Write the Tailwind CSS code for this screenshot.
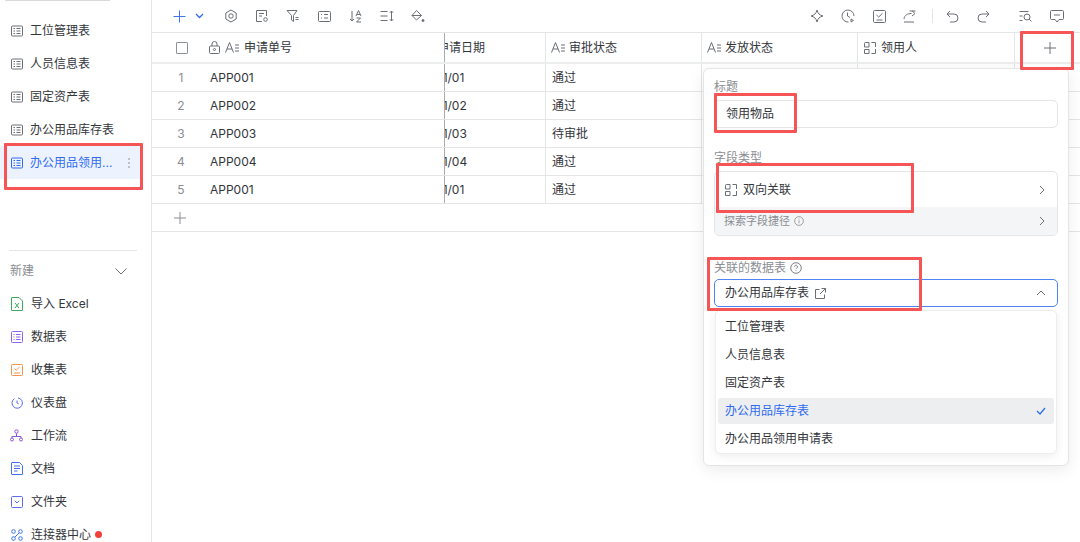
<!DOCTYPE html>
<html lang="zh-CN">
<head>
<meta charset="UTF-8">
<title>办公用品领用申请表</title>
<script src="https://cdn.jsdelivr.net/npm/@tailwindcss/browser@4"></script>
</head>
<body class="bg-white">
<div class="relative flex w-[1080px] h-[542px] overflow-hidden text-[12px] text-[#33363b] font-['Inter','Noto_Sans_CJK_SC',sans-serif]">

  <!-- Sidebar -->
  <aside class="w-[152px] shrink-0 border-r border-[#e4e5e7] h-full">
    <div class="mx-[5px] w-[105px] h-px bg-[#d9dadc]"></div>
    <div class="pt-[13px] pr-[10px] h-[249px]">
      <div class="flex items-center gap-[7px] h-[33px] pl-[11px]">
        <svg class="w-[12px] h-[12px] text-[#6b6f76]" viewBox="0 0 12 12" fill="none" stroke="currentColor"><rect x="0.5" y="1" width="11" height="10" rx="1"/><path d="M2.5 3.5h1.5M5.5 3.5h4M2.5 6h1.5M5.5 6h4M2.5 8.5h1.5M5.5 8.5h4"/></svg>
        <span>工位管理表</span>
      </div>
      <div class="flex items-center gap-[7px] h-[33px] pl-[11px]">
        <svg class="w-[12px] h-[12px] text-[#6b6f76]" viewBox="0 0 12 12" fill="none" stroke="currentColor"><rect x="0.5" y="1" width="11" height="10" rx="1"/><path d="M2.5 3.5h1.5M5.5 3.5h4M2.5 6h1.5M5.5 6h4M2.5 8.5h1.5M5.5 8.5h4"/></svg>
        <span>人员信息表</span>
      </div>
      <div class="flex items-center gap-[7px] h-[33px] pl-[11px]">
        <svg class="w-[12px] h-[12px] text-[#6b6f76]" viewBox="0 0 12 12" fill="none" stroke="currentColor"><rect x="0.5" y="1" width="11" height="10" rx="1"/><path d="M2.5 3.5h1.5M5.5 3.5h4M2.5 6h1.5M5.5 6h4M2.5 8.5h1.5M5.5 8.5h4"/></svg>
        <span>固定资产表</span>
      </div>
      <div class="flex items-center gap-[7px] h-[33px] pl-[11px]">
        <svg class="w-[12px] h-[12px] text-[#6b6f76]" viewBox="0 0 12 12" fill="none" stroke="currentColor"><rect x="0.5" y="1" width="11" height="10" rx="1"/><path d="M2.5 3.5h1.5M5.5 3.5h4M2.5 6h1.5M5.5 6h4M2.5 8.5h1.5M5.5 8.5h4"/></svg>
        <span>办公用品库存表</span>
      </div>
      <div class="flex items-center gap-[7px] h-[33px] pl-[11px] ml-[0px] text-[#2f6bf0] bg-[#edf3fe]">
        <svg class="w-[12px] h-[12px]" viewBox="0 0 12 12" fill="none" stroke="currentColor"><rect x="0.5" y="1" width="11" height="10" rx="1"/><path d="M2.5 3.5h1.5M5.5 3.5h4M2.5 6h1.5M5.5 6h4M2.5 8.5h1.5M5.5 8.5h4"/></svg>
        <span>办公用品领用...</span>
        <svg class="w-[4px] h-[12px] ml-[8px] text-[#7b7f86]" viewBox="0 0 4 12" fill="currentColor"><circle cx="2" cy="2" r="0.8"/><circle cx="2" cy="6" r="0.8"/><circle cx="2" cy="10" r="0.8"/></svg>
      </div>
    </div>
    <div class="mx-[9px] w-[128px] h-px bg-[#e4e5e7]"></div>
    <div class="flex items-center justify-between h-[40px] pl-[10px] pr-[24px] text-[#8a8d93]">
      <span>新建</span>
      <svg class="w-[12px] h-[7px] text-[#6b6f76]" viewBox="0 0 12 7" fill="none" stroke="currentColor"><path d="M0.5 0.5L6 6l5.5-5.5"/></svg>
    </div>
    <div class="flex flex-col pl-[11px]">
      <div class="flex items-center gap-[8px] h-[33px] -mt-[4px]">
        <svg class="w-[12px] h-[14px] text-[#3fa85a]" viewBox="0 0 12 14" fill="none" stroke="currentColor"><path d="M1 0.5h7l3.5 3.5v9a.5.5 0 0 1-.5.5H1a.5.5 0 0 1-.5-.5V1a.5.5 0 0 1 .5-.5z"/><path d="M4 6l4 5M8 6l-4 5"/></svg>
        <span>导入 Excel</span>
      </div>
      <div class="flex items-center gap-[8px] h-[33px]">
        <svg class="w-[12px] h-[12px] text-[#8f63ea]" viewBox="0 0 12 12" fill="none" stroke="currentColor"><rect x="0.5" y="0.5" width="11" height="11" rx="1"/><path d="M2.5 3.5h1M5 3.5h4.5M2.5 6h1M5 6h4.5M2.5 8.5h1M5 8.5h4.5"/></svg>
        <span>数据表</span>
      </div>
      <div class="flex items-center gap-[8px] h-[33px]">
        <svg class="w-[12px] h-[12px] text-[#f5934a]" viewBox="0 0 12 12" fill="none" stroke="currentColor"><rect x="0.5" y="0.5" width="11" height="11" rx="1"/><path d="M3.5 4.5L5.3 6.2 8.5 3M3 9h6"/></svg>
        <span>收集表</span>
      </div>
      <div class="flex items-center gap-[8px] h-[33px]">
        <svg class="w-[12px] h-[12px] text-[#5b6cf0]" viewBox="0 0 12 12" fill="none" stroke="currentColor"><path d="M3.5 1.6A5.2 5.2 0 1 0 7 .9"/><path d="M6 3.5V6l1.6 1"/></svg>
        <span>仪表盘</span>
      </div>
      <div class="flex items-center gap-[8px] h-[33px]">
        <svg class="w-[13px] h-[13px] -ml-[1px] text-[#8f55dd]" viewBox="0 0 13 13" fill="none" stroke="currentColor"><circle cx="6.5" cy="2.5" r="1.7"/><circle cx="2" cy="10.5" r="1.5"/><circle cx="11" cy="10.5" r="1.5"/><path d="M6.5 4.2V7.5M2 9V7.5h9V9"/></svg>
        <span>工作流</span>
      </div>
      <div class="flex items-center gap-[8px] h-[33px]">
        <svg class="w-[12px] h-[13px] text-[#3f74ee]" viewBox="0 0 12 13" fill="none" stroke="currentColor"><path d="M1 .5h7.5L11.5 3.500V12a.5.5 0 0 1-.5.5H1a.5.5 0 0 1-.5-.5V1a.5.5 0 0 1 .5-.5z"/><path d="M3 4h6M3 6.500h6M3 9h3.500"/></svg>
        <span>文档</span>
      </div>
      <div class="flex items-center gap-[8px] h-[33px]">
        <svg class="w-[12px] h-[12px] text-[#5b6cf0]" viewBox="0 0 12 12" fill="none" stroke="currentColor"><rect x="0.5" y="0.5" width="11" height="11" rx="1"/><path d="M3.800 4.800L6 7l2.200-2.200"/></svg>
        <span>文件夹</span>
      </div>
      <div class="flex items-center gap-[8px] h-[33px]">
        <svg class="w-[12px] h-[12px] text-[#3f74ee]" viewBox="0 0 12 12" fill="none" stroke="currentColor"><circle cx="2.500" cy="2.500" r="1.800"/><circle cx="9.500" cy="2.500" r="1.800"/><circle cx="2.500" cy="9.500" r="1.800"/><circle cx="9.500" cy="9.500" r="1.800"/><path d="M4 8l4-4"/></svg>
        <span>连接器中心</span>
        <span class="w-[7px] h-[7px] rounded-full bg-[#f2403c] -ml-[4px]"></span>
      </div>
    </div>
  </aside>

  <!-- Main -->
  <main class="flex-1 min-w-0">
    <!-- Toolbar -->
    <div class="flex items-center justify-between h-[33px] border-b border-[#e4e5e7] text-[#6b6f76]">
      <div class="flex items-center pl-[21px]">
        <svg class="w-[13px] h-[13px] text-[#3f74ee]" viewBox="0 0 13 13" fill="none" stroke="currentColor"><path d="M6.500 0.500v12M0.500 6.500h12"/></svg>
        <svg class="w-[9px] h-[6px] ml-[9px] text-[#2f6bf0]" viewBox="0 0 9 6" fill="none" stroke="currentColor" stroke-width="1.300"><path d="M1 1l3.500 3.500L8 1"/></svg>
        <svg class="w-[14px] h-[14px] ml-[20px]" viewBox="0 0 14 14" fill="none" stroke="currentColor"><path d="M7 1l5.200 3v6L7 13l-5.200-3V4z"/><circle cx="7" cy="7" r="2.200"/></svg>
        <svg class="w-[14px] h-[14px] ml-[17px]" viewBox="0 0 14 14" fill="none" stroke="currentColor"><path d="M7 12.500H1.500v-11h10V7"/><path d="M4 4.500h5M4 7h3"/><circle cx="10.500" cy="10.500" r="1.800"/></svg>
        <svg class="w-[14px] h-[14px] ml-[17px]" viewBox="0 0 14 14" fill="none" stroke="currentColor"><path d="M1 1.500h10L7.500 6.500v6l-2-1.500V6.500z"/><path d="M9.500 8.500h3M9.500 10.500h3"/></svg>
        <svg class="w-[13px] h-[13px] ml-[18px]" viewBox="0 0 13 13" fill="none" stroke="currentColor"><rect x="0.500" y="1.500" width="12" height="10" rx="1"/><path d="M3 4.500h1M6 4.500h4M3 8h1M6 8h4"/></svg>
        <svg class="w-[13px] h-[14px] ml-[18px]" viewBox="0 0 13 14" fill="none" stroke="currentColor"><path d="M3 2v10M1 10l2 2 2-2"/><path d="M7 7l2.500-5.500L12 7M8 5.500h3M7.500 9h4l-4 4h4.500"/></svg>
        <svg class="w-[14px] h-[12px] ml-[18px]" viewBox="0 0 14 12" fill="none" stroke="currentColor"><path d="M0.500 1.500h7M0.500 6h7M0.500 10.500h7M11.500 1v10M9.800 2.800L11.500 1l1.700 1.800M9.800 9.200l1.700 1.800 1.700-1.800"/></svg>
        <svg class="w-[14px] h-[14px] ml-[17px]" viewBox="0 0 14 14" fill="none" stroke="currentColor"><path d="M5.500 1.500L1 6.500l4.500 4.500L10.500 6.500z"/><path d="M1 6.500h9.500"/><circle cx="12" cy="11.500" r="1" fill="currentColor"/></svg>
      </div>
      <div class="flex items-center pr-[16px]">
        <svg class="w-[14px] h-[14px]" viewBox="0 0 14 14" fill="none" stroke="currentColor"><path d="M7 1c.8 3.500 2.500 5.200 6 6-3.500.8-5.200 2.500-6 6-.8-3.500-2.500-5.200-6-6 3.500-.8 5.200-2.500 6-6z"/></svg>
        <svg class="w-[14px] h-[14px] ml-[17px]" viewBox="0 0 14 14" fill="none" stroke="currentColor"><path d="M7.500 13A6 6 0 1 1 13 7"/><path d="M6.500 3.500V7l2.500 1.500M10 10l2.500 1.500L10 13z"/></svg>
        <svg class="w-[13px] h-[13px] ml-[18px]" viewBox="0 0 13 13" fill="none" stroke="currentColor"><rect x="0.500" y="0.500" width="12" height="12" rx="1"/><path d="M3.500 5l2.200 2L9.500 3.300M3.500 10h6"/></svg>
        <svg class="w-[14px] h-[13px] ml-[17px]" viewBox="0 0 14 13" fill="none" stroke="currentColor"><path d="M1 9c.5-4 3.500-5.500 7.500-5.500M6.500 1h6v0M9 .8L12 3.500 9 6M1 12h10"/></svg>
        <span class="w-px h-[14px] bg-[#e4e5e7] ml-[15px]"></span>
        <svg class="w-[13px] h-[13px] ml-[13px]" viewBox="0 0 13 13" fill="none" stroke="currentColor"><path d="M4 1L1 4l3 3M1 4h7a4 4 0 0 1 0 8H4"/></svg>
        <svg class="w-[13px] h-[13px] ml-[18px]" viewBox="0 0 13 13" fill="none" stroke="currentColor"><path d="M9 1l3 3-3 3M12 4H5a4 4 0 0 0 0 8h4"/></svg>
        <svg class="w-[14px] h-[12px] ml-[29px]" viewBox="0 0 14 12" fill="none" stroke="currentColor"><path d="M0.500 1.500h9M0.500 6h3M0.500 10.500h3"/><circle cx="8" cy="7" r="3"/><path d="M10.200 9.200L12.500 11.500"/></svg>
        <svg class="w-[14px] h-[13px] ml-[17px]" viewBox="0 0 14 13" fill="none" stroke="currentColor"><path d="M1.500 0.500h11a1 1 0 0 1 1 1v7a1 1 0 0 1-1 1H9L7 12 5 9.500H1.500a1 1 0 0 1-1-1v-7a1 1 0 0 1 1-1z"/><path d="M4 5h6"/></svg>
      </div>
    </div>

    <!-- Table header -->
    <div class="grid grid-cols-[293px_101px_156px_156px_157px_65px] h-[31px] border-b-2 border-[#eceded]">
      <div class="flex items-center border-r border-[#a9abae]">
        <span class="w-[12px] h-[12px] ml-[24px] border border-[#8d9096] rounded-[1px]"></span>
        <svg class="w-[11px] h-[13px] ml-[21px] text-[#6b6f76]" viewBox="0 0 11 13" fill="none" stroke="currentColor"><rect x="0.500" y="5" width="10" height="7.500" rx="1"/><path d="M3 5V3a2.500 2.500 0 0 1 5 0v2"/><circle cx="5.500" cy="8.500" r="1"/></svg>
        <svg class="w-[14px] h-[11px] ml-[5px] text-[#6b6f76]" viewBox="0 0 14 11" fill="none" stroke="currentColor"><path d="M0.500 10.500L4.500 0.500l4 10M2 7h5M10 3h4M10 6h4M10 9h4"/></svg>
        <span class="ml-[5px]">申请单号</span>
      </div>
      <div class="flex items-center overflow-hidden border-r border-[#e4e5e7]"><span class="whitespace-nowrap ml-[-8px]">申请日期</span></div>
      <div class="flex items-center pl-[5px] border-r border-[#e4e5e7]">
        <svg class="w-[14px] h-[11px] text-[#6b6f76]" viewBox="0 0 14 11" fill="none" stroke="currentColor"><path d="M0.500 10.500L4.500 0.500l4 10M2 7h5M10 3h4M10 6h4M10 9h4"/></svg>
        <span class="ml-[4px]">审批状态</span>
      </div>
      <div class="flex items-center pl-[5px] border-r border-[#e4e5e7]">
        <svg class="w-[14px] h-[11px] text-[#6b6f76]" viewBox="0 0 14 11" fill="none" stroke="currentColor"><path d="M0.500 10.500L4.500 0.500l4 10M2 7h5M10 3h4M10 6h4M10 9h4"/></svg>
        <span class="ml-[4px]">发放状态</span>
      </div>
      <div class="flex items-center pl-[6px] border-r border-[#e4e5e7]">
        <svg class="w-[12px] h-[12px] text-[#6b6f76]" viewBox="0 0 12 12" fill="none" stroke="currentColor"><path d="M5 5V.5H1.500a1 1 0 0 0-1 1V5zM7.500.5h4V5M11.500 7v4.500H7.500M.5 7.500h4.500v4H.5z"/></svg>
        <span class="ml-[5px]">领用人</span>
      </div>
      <div class="flex items-center justify-end pr-[24px] text-[#6b6f76]">
        <svg class="w-[12px] h-[12px]" viewBox="0 0 12 12" fill="none" stroke="currentColor"><path d="M6 0v12M0 6h12"/></svg>
      </div>
    </div>

    <!-- Rows -->
    <div class="grid grid-cols-[293px_101px_156px_156px_157px] h-[28px] border-b border-[#e4e5e7]">
      <div class="flex items-center border-r border-[#a9abae]"><span class="w-[58px] text-center text-[#8a8d93]">1</span>APP001</div>
      <div class="flex items-center overflow-hidden border-r border-[#e4e5e7]"><span class="whitespace-nowrap ml-[-44px]">2024/01/01</span></div>
      <div class="flex items-center pl-[6px] border-r border-[#e4e5e7]">通过</div>
      <div class="border-r border-[#e4e5e7]"></div>
      <div class="border-r border-[#e4e5e7]"></div>
    </div>
    <div class="grid grid-cols-[293px_101px_156px_156px_157px] h-[28px] border-b border-[#e4e5e7]">
      <div class="flex items-center border-r border-[#a9abae]"><span class="w-[58px] text-center text-[#8a8d93]">2</span>APP002</div>
      <div class="flex items-center overflow-hidden border-r border-[#e4e5e7]"><span class="whitespace-nowrap ml-[-44px]">2024/01/02</span></div>
      <div class="flex items-center pl-[6px] border-r border-[#e4e5e7]">通过</div>
      <div class="border-r border-[#e4e5e7]"></div>
      <div class="border-r border-[#e4e5e7]"></div>
    </div>
    <div class="grid grid-cols-[293px_101px_156px_156px_157px] h-[28px] border-b border-[#e4e5e7]">
      <div class="flex items-center border-r border-[#a9abae]"><span class="w-[58px] text-center text-[#8a8d93]">3</span>APP003</div>
      <div class="flex items-center overflow-hidden border-r border-[#e4e5e7]"><span class="whitespace-nowrap ml-[-44px]">2024/01/03</span></div>
      <div class="flex items-center pl-[6px] border-r border-[#e4e5e7]">待审批</div>
      <div class="border-r border-[#e4e5e7]"></div>
      <div class="border-r border-[#e4e5e7]"></div>
    </div>
    <div class="grid grid-cols-[293px_101px_156px_156px_157px] h-[28px] border-b border-[#e4e5e7]">
      <div class="flex items-center border-r border-[#a9abae]"><span class="w-[58px] text-center text-[#8a8d93]">4</span>APP004</div>
      <div class="flex items-center overflow-hidden border-r border-[#e4e5e7]"><span class="whitespace-nowrap ml-[-44px]">2024/01/04</span></div>
      <div class="flex items-center pl-[6px] border-r border-[#e4e5e7]">通过</div>
      <div class="border-r border-[#e4e5e7]"></div>
      <div class="border-r border-[#e4e5e7]"></div>
    </div>
    <div class="grid grid-cols-[293px_101px_156px_156px_157px] h-[28px] border-b border-[#e4e5e7]">
      <div class="flex items-center border-r border-[#a9abae]"><span class="w-[58px] text-center text-[#8a8d93]">5</span>APP001</div>
      <div class="flex items-center overflow-hidden border-r border-[#e4e5e7]"><span class="whitespace-nowrap ml-[-44px]">2024/01/01</span></div>
      <div class="flex items-center pl-[6px] border-r border-[#e4e5e7]">通过</div>
      <div class="border-r border-[#e4e5e7]"></div>
      <div class="border-r border-[#e4e5e7]"></div>
    </div>
    <div class="flex items-center h-[28px] pl-[22px] border-b border-[#e4e5e7] text-[#8a8d93]">
      <svg class="w-[12px] h-[12px]" viewBox="0 0 12 12" fill="none" stroke="currentColor"><path d="M6 0v12M0 6h12"/></svg>
    </div>
  </main>

  <!-- Field popover -->
  <div class="absolute left-[703px] top-[68px] w-[366px] h-[398px] bg-white border border-[#e4e5e7] rounded-[6px] shadow-[0_4px_16px_rgba(0,0,0,0.08)] px-[10px] pt-[9px]">
    <div class="h-[22px] text-[#8a8d93] leading-[18px]">标题</div>
    <div class="flex items-center h-[28px] px-[11px] border border-[#e4e5e7] rounded-[5px]">领用物品</div>
    <div class="mt-[21px] h-[22px] text-[#8a8d93] leading-[18px]">字段类型</div>
    <div class="border border-[#e4e5e7] rounded-[5px] overflow-hidden">
      <div class="flex items-center justify-between h-[35px] pl-[10px] pr-[12px]">
        <span class="flex items-center gap-[6px]">
          <svg class="w-[12px] h-[12px] text-[#6b6f76]" viewBox="0 0 12 12" fill="none" stroke="currentColor"><path d="M5 5V.5H1.500a1 1 0 0 0-1 1V5zM7.500.5h4V5M11.500 7v4.500H7.500M.5 7.500h4.500v4H.5z"/></svg>
          双向关联
        </span>
        <svg class="w-[6px] h-[10px] text-[#6b6f76]" viewBox="0 0 6 10" fill="none" stroke="currentColor"><path d="M1 1l4 4-4 4"/></svg>
      </div>
      <div class="flex items-center justify-between h-[28px] pl-[9px] pr-[12px] bg-[#f4f5f6] text-[11px] text-[#8a8d93]">
        <span class="flex items-center gap-[4px]">
          探索字段捷径
          <svg class="w-[10px] h-[10px]" viewBox="0 0 10 10" fill="none" stroke="currentColor" stroke-width="0.800"><circle cx="5" cy="5" r="4.400"/><path d="M5 4.300V7.300M5 2.500V3.400"/></svg>
        </span>
        <svg class="w-[6px] h-[10px] text-[#6b6f76]" viewBox="0 0 6 10" fill="none" stroke="currentColor"><path d="M1 1l4 4-4 4"/></svg>
      </div>
    </div>
    <div class="mt-[21px] h-[22px] flex items-center gap-[4px] text-[#8a8d93]">
      关联的数据表
      <svg class="w-[12px] h-[12px] text-[#6b6f76]" viewBox="0 0 12 12" fill="none" stroke="currentColor" stroke-width="0.900"><circle cx="6" cy="6" r="5.300"/><path d="M4.500 4.700a1.500 1.500 0 1 1 2.300 1.300c-.5.300-.8.600-.8 1.100M6 8.300v.8"/></svg>
    </div>
    <div class="flex items-center justify-between h-[28px] pl-[10px] pr-[11px] border border-[#4f84f5] rounded-[5px]">
      <span class="flex items-center gap-[6px]">
        办公用品库存表
        <svg class="w-[11px] h-[11px] text-[#6b6f76]" viewBox="0 0 11 11" fill="none" stroke="currentColor"><path d="M4.500 1.500H.5v9h9V6.500M6.500.5h4v4M10.500.5L5 6"/></svg>
      </span>
      <svg class="w-[10px] h-[6px] text-[#6b6f76]" viewBox="0 0 10 6" fill="none" stroke="currentColor"><path d="M1 5l4-4 4 4"/></svg>
    </div>
    <!-- Dropdown options -->
    <div class="mt-[3px] mx-[1px] h-[144px] border border-[#eceded] rounded-[5px] bg-white shadow-[0_2px_10px_rgba(0,0,0,0.07)] px-[2px] pt-[2px]">
      <div class="flex items-center h-[28px] px-[7px]">工位管理表</div>
      <div class="flex items-center h-[28px] px-[7px]">人员信息表</div>
      <div class="flex items-center h-[28px] px-[7px]">固定资产表</div>
      <div class="flex items-center justify-between h-[26px] my-[1px] pl-[7px] pr-[8px] bg-[#eceeef] rounded-[3px] text-[#2f6bf0]">
        办公用品库存表
        <svg class="w-[10px] h-[8px]" viewBox="0 0 10 8" fill="none" stroke="currentColor" stroke-width="1.300"><path d="M1 4l3 3 5-6"/></svg>
      </div>
      <div class="flex items-center h-[28px] px-[7px]">办公用品领用申请表</div>
    </div>
  </div>

  <!-- Red annotation boxes -->
  <div class="absolute left-[4px] top-[143px] w-[139px] h-[47px] border-[3px] border-[#f65555] rounded-[1px]"></div>
  <div class="absolute left-[1020px] top-[31px] w-[54px] h-[39px] border-[3px] border-[#f65555] rounded-[1px]"></div>
  <div class="absolute left-[714px] top-[93px] w-[83px] h-[40px] border-[3px] border-[#f65555] rounded-[1px]"></div>
  <div class="absolute left-[716px] top-[163px] w-[198px] h-[50px] border-[3px] border-[#f65555] rounded-[1px]"></div>
  <div class="absolute left-[707px] top-[257px] w-[215px] h-[54px] border-[3px] border-[#f65555] rounded-[1px]"></div>
</div>
</body>
</html>
